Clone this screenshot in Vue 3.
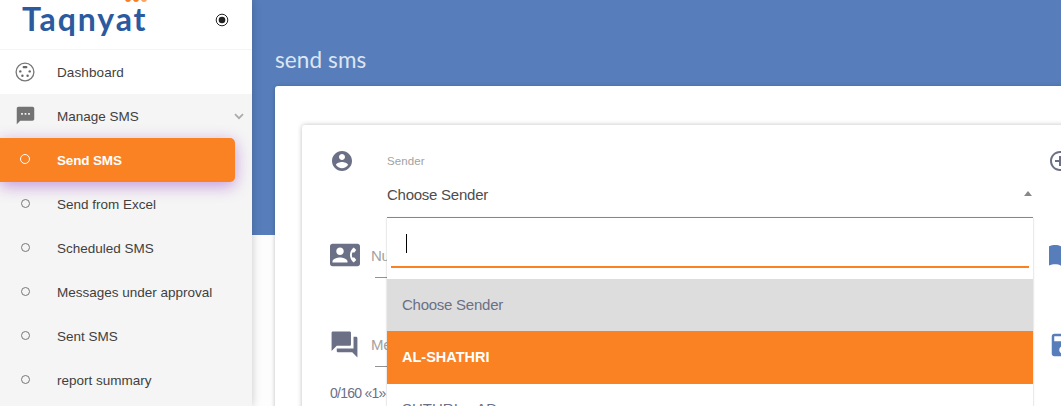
<script setup>
const submenu = [
  { label: 'Send SMS', active: true },
  { label: 'Send from Excel' },
  { label: 'Scheduled SMS' },
  { label: 'Messages under approval' },
  { label: 'Sent SMS' },
  { label: 'report summary' },
]
</script>

<template>
  <div class="page">
    <aside class="sidebar">
      <header class="brand">
        <div class="logo">
          Taqnyat
          <span class="dots"><i></i><i></i><i></i></span>
        </div>
        <svg class="radio" viewBox="0 0 14 14"><circle cx="7" cy="7" r="5.8" fill="none" stroke="#222" stroke-width="1" /><circle cx="7" cy="7" r="3.300" fill="#222" /></svg>
      </header>
      <nav>
        <div class="item dashboard">
          <span class="ico"><svg width="20" height="20" viewBox="0 0 20 20"><circle cx="10" cy="10" r="8.9" fill="none" stroke="#777" stroke-width="1.3" /><g fill="#666"><rect x="7.6" y="4" width="4.8" height="2.3" rx="1" /><circle cx="5.3" cy="9.4" r="1.2" /><circle cx="14.7" cy="9.4" r="1.2" /><circle cx="7.4" cy="13.8" r="1.2" /><circle cx="12.6" cy="13.8" r="1.2" /></g></svg></span>
          <span class="dash">Dashboard</span>
        </div>
        <div class="group">
          <div class="item">
            <span class="ico"><svg class="sms" width="21" height="21" viewBox="0 0 24 24"><path fill="#737373" d="M20 2H4c-1.100 0-2 .9-2 2v18l4-4h14c1.100 0 2-.9 2-2V4c0-1.100-.9-2-2-2zM9 11H7V9h2v2zm4 0h-2V9h2v2zm4 0h-2V9h2v2z" /></svg></span>
            <span>Manage SMS</span>
            <svg class="chev" viewBox="0 0 10 7"><path d="M1 1.200 5 5.200 9 1.200" fill="none" stroke="#aaa" stroke-width="1.700" /></svg>
          </div>
          <div v-for="s in submenu" :key="s.label" class="item" :class="{ active: s.active }">
            <span class="ico"><i class="ring"></i></span>
            <span>{{ s.label }}</span>
          </div>
        </div>
      </nav>
    </aside>

    <main>
      <h1>send sms</h1>
      <section class="card">
        <div class="form">
          <div class="row sender">
            <svg class="lead" width="24" height="24" viewBox="0 0 24 24"><path fill="#6b7086" d="M12 2C6.480 2 2 6.480 2 12s4.480 10 10 10 10-4.480 10-10S17.520 2 12 2zm0 3c1.660 0 3 1.340 3 3s-1.340 3-3 3-3-1.340-3-3 1.340-3 3-3zm0 14.200c-2.500 0-4.710-1.280-6-3.220.030-1.990 4-3.080 6-3.080 1.990 0 5.970 1.090 6 3.080-1.290 1.940-3.500 3.220-6 3.220z" /></svg>
            <div class="select">
              <label>Sender</label>
              <div class="value"><span>Choose Sender</span><i class="caret"></i></div>
              <div class="dropdown">
                <div class="search"><i class="cursor"></i></div>
                <ul>
                  <li class="muted">Choose Sender</li>
                  <li class="picked">AL-SHATHRI</li>
                  <li class="next">SHTHRI - AD</li>
                </ul>
              </div>
            </div>
            <svg class="tail" width="24" height="24" viewBox="0 0 24 24"><path fill="#6b7086" d="M13 7h-2v4H7v2h4v4h2v-4h4v-2h-4V7zm-1-5C6.480 2 2 6.480 2 12s4.480 10 10 10 10-4.480 10-10S17.520 2 12 2zm0 18c-4.410 0-8-3.590-8-8s3.590-8 8-8 8 3.590 8 8-3.590 8-8 8z" /></svg>
          </div>
          <div class="row numbers">
            <svg class="lead" width="30" height="30" viewBox="0 0 24 24"><path fill="#6b7086" d="M22 3H2C.9 3 0 3.900 0 5v14c0 1.100.9 2 2 2h20c1.100 0 1.990-.9 1.990-2L24 5c0-1.100-.9-2-2-2zM8 6c1.660 0 3 1.340 3 3s-1.340 3-3 3-3-1.340-3-3 1.340-3 3-3zm6 12H2v-1c0-2 4-3.100 6-3.100s6 1.100 6 3.100v1zm3.850-4h1.640L21 16l-1.990 1.990c-1.310-.98-2.280-2.380-2.730-3.990-.18-.64-.28-1.310-.28-2s.1-1.360.28-2c.45-1.620 1.420-3.010 2.730-3.990L21 8l-1.510 2h-1.640c-.22.630-.35 1.300-.35 2s.13 1.370.35 2z" /></svg>
            <div class="field">Numbers</div>
            <svg class="tail" width="26" height="23" viewBox="0 0 26 23"><path fill="#577ebb" d="M0 2.300C4 .4 9 .4 12.500 2.500V22C9 19.600 4 19.800 0 21.600zM13.500 2.500C17 .4 22 .4 26 2.300v19.300c-4-1.800-9-2-12.500.4z" /></svg>
          </div>
          <div class="row message">
            <svg class="lead" width="31" height="31" viewBox="0 0 24 24"><path fill="#6b7086" d="M21 6h-2v9H6v2c0 .55.45 1 1 1h11l4 4V7c0-.55-.45-1-1-1zm-4 6V3c0-.55-.45-1-1-1H3c-.55 0-1 .45-1 1v14l4-4h10c.55 0 1-.45 1-1z" /></svg>
            <div class="field">Message</div>
            <svg class="tail" width="30" height="30" viewBox="0 0 24 24"><path fill="#577ebb" d="M17 3H5c-1.110 0-2 .9-2 2v14c0 1.100.89 2 2 2h14c1.100 0 2-.9 2-2V7l-4-4zm-5 16c-1.660 0-3-1.340-3-3s1.340-3 3-3 3 1.340 3 3-1.340 3-3 3zm3-10H5V5h10v4z" /></svg>
          </div>
          <p class="count">0/160 «1»</p>
        </div>
      </section>
    </main>
  </div>
</template>

<style>
html, body { margin: 0; overflow: hidden; }
</style>

<style scoped>
* { box-sizing: border-box; }
.page { display: flex; width: 1061px; height: 406px; overflow: hidden; background: #fdfdfd; font-family: "Liberation Sans", Arial, sans-serif; }
.sidebar { position: relative; z-index: 2; flex: 0 0 252px; height: 406px; background: #fff; overflow: hidden; }
.page::before { content: ""; position: absolute; z-index: 1; left: 0; top: 0; width: 252px; height: 406px; box-shadow: 0 0 9px rgba(0, 0, 0, .22); }
.brand { display: flex; height: 50px; border-bottom: 1px solid #f5f5f5; padding-left: 22px; }
.logo { position: relative; width: 192px; font: 700 32px/38px Lato, sans-serif; letter-spacing: 1.9px; color: #2b5a9f; }
.dots { position: absolute; left: 103px; top: -4px; display: flex; gap: 2px; }
.dots i { width: 6px; height: 6px; border-radius: 50%; background: #f97c20; }
.dots i:last-child { background: #fca35c; }
.radio { width: 14px; height: 14px; margin: 13px 0 0 .5px; }
.item { display: flex; align-items: center; height: 44px; font-size: 13.500px; color: #3f3f3f; white-space: nowrap; }
.ico { display: flex; justify-content: center; flex: 0 0 57px; padding-right: 7px; }
.dash { letter-spacing: .1px; }
.sms { margin-top: -2px; }
.group { background: #f5f5f5; height: 320px; }
.chev { width: 10px; height: 7px; margin-left: auto; margin-right: 8px; }
.ring { width: 9px; height: 9px; margin-top: -2px; border: 1px solid #777; border-radius: 50%; }
.active { width: 235px; background: #fa8223; color: #fff; font-weight: 700; letter-spacing: -.15px; border-radius: 0 5px 5px 0; box-shadow: 0 4px 16px rgba(145, 50, 190, .48); }
.active .ring { border: 1.500px solid #fff; width: 10px; height: 10px; }
main { flex: 1; min-width: 0; height: 406px; padding-left: 23px; background: linear-gradient(#577ebb 235px, #fdfdfd 235px); overflow: hidden; }
h1 { margin: 0; height: 86px; padding-top: 45px; font: 400 22.500px/30px Lato, sans-serif; letter-spacing: .1px; color: #dce5f2; }
.card { width: 840px; height: 360px; padding: 39px 0 0 27px; background: #fff; border-radius: 3px 0 0 0; box-shadow: 0 1px 4px rgba(0, 0, 0, .25); }
.form { width: 800px; height: 340px; padding-left: 28px; border-radius: 3px 0 0 0; box-shadow: 0 0 5px rgba(0, 0, 0, .25); }
.row { display: flex; }
.lead, .tail { flex: none; }
.sender { height: 93px; }
.sender .lead { margin-top: 24px; }
.sender .tail { margin: 24px 0 0 15px; }
.select { position: relative; width: 646px; height: 93px; margin-left: 33px; border-bottom: 1px solid #929292; }
.select label { display: block; padding-top: 29px; font-size: 11.500px; line-height: 14px; letter-spacing: .1px; color: #a2a2a2; }
.value { display: flex; justify-content: space-between; align-items: center; height: 52px; font-size: 15px; letter-spacing: -.25px; color: #4d4d4d; }
.caret { border: 4px solid transparent; border-top: 0; border-bottom: 5px solid #888; margin: -2px 1px 0 0; }
.dropdown { position: absolute; z-index: 3; left: 0; top: 93px; width: 646px; height: 200px; padding-top: 3px; background: #fff; box-shadow: 0 0 2px rgba(0, 0, 0, .25); }
.search { height: 47px; margin: 0 4px; border-bottom: 2px solid #fa8223; padding: 13px 15px; }
.cursor { display: block; width: 1px; height: 19px; background: #000; }
ul { list-style: none; margin: 11px 0 0; padding: 0; }
li { height: 53px; padding-left: 15px; font-size: 15px; line-height: 53px; letter-spacing: -.25px; color: #6b7086; }
.muted { height: 52px; line-height: 52px; background: #ddd; }
.picked { background: #fa8223; color: #fff; font-weight: 700; font-size: 14.500px; letter-spacing: 0; }
.next { line-height: 50px; letter-spacing: 0; word-spacing: 3px; }
.field { font-size: 15px; color: #a2a2a2; border-bottom: 1px solid #929292; width: 657px; text-indent: -4px; letter-spacing: -.3px; }
.numbers { height: 60px; }
.numbers .lead { margin-top: 22px; }
.numbers .field { margin-left: 15px; line-height: 76px; }
.numbers .tail { margin: 26px 0 0 17px; }
.message { height: 89px; }
.message .lead { margin: 51px 0 0 -1px; }
.message .field { margin-left: 15px; padding-top: 52px; line-height: 30px; }
.message .tail { margin: 52px 0 0 16px; }
.count { margin: 0; padding-top: 16px; font-size: 14px; line-height: 20px; letter-spacing: -.75px; color: #6b7086; }
</style>
